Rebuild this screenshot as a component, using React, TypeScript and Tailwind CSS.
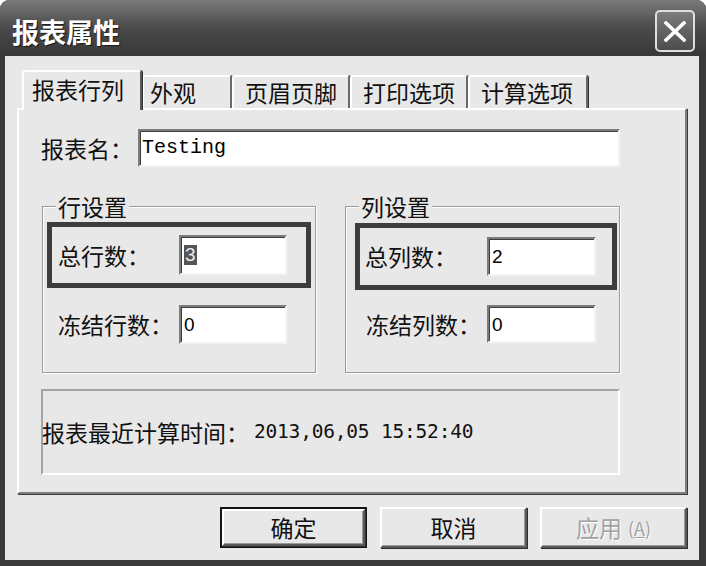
import React from "react";

const sunken =
  "bg-white border-2 border-t-[#7c7c7c] border-l-[#7c7c7c] border-b-[#f4f4f4] border-r-[#f4f4f4] shadow-[inset_1px_1px_0_#3e3e3e]";
const raised =
  "border-2 border-t-white border-l-white border-r-[#5a5a5a] border-b-[#5a5a5a] shadow-[inset_-1px_-1px_0_#9a9a9a,1px_1px_0_#2e2e2e]";

function Input({ w, h, children }: { w: string; h: string; children?: React.ReactNode }) {
  return (
    <div className={`${w} ${h} ${sunken} flex items-center pl-[3px] font-['Liberation_Sans',sans-serif] text-[19px] leading-none text-black`}>
      {children}
    </div>
  );
}

function Tab({ label, w, pl, active }: { label: string; w: string; pl: string; active?: boolean }) {
  if (active) {
    return (
      <div
        className={`${w} h-[40px] -mb-[2px] relative z-10 bg-[#e8e8e8] border-t-2 border-l-2 border-white border-r-2 border-r-[#5a5a5a] rounded-t-[3px] shadow-[1px_0_0_#2e2e2e] pt-[4px] ${pl} text-[23px] leading-[26px]`}
      >
        {label}
      </div>
    );
  }
  return (
    <div
      className={`${w} h-[33px] bg-[#e8e8e8] border-t-2 border-l-2 border-white border-r-2 border-r-[#6a6a6a] rounded-t-[3px] shadow-[1px_0_0_#2e2e2e] pt-[2px] ${pl} text-[23px] leading-[26px]`}
    >
      {label}
    </div>
  );
}

export default function App() {
  return (
    <div className="w-[706px] h-[566px] bg-white">
      <div className="w-[706px] h-[566px] flex flex-col rounded-t-[9px] overflow-hidden bg-[#3a3a3a] font-['Noto_Sans_CJK_SC',sans-serif] text-[#111]">
        {/* Title bar */}
        <div className="h-[56px] shrink-0 flex items-center justify-between pl-[12px] pr-[11px] bg-linear-to-b from-[#7a7a7a] via-[#4a4a4a] to-[#383838]">
          <span className="text-[27px] font-bold text-white leading-none mt-[6px] [text-shadow:1px_1px_1px_#1a1a1a]">
            报表属性
          </span>
          <div className="w-[40px] h-[42px] mt-[6px] rounded-[5px] border-2 border-[#dedede] bg-linear-to-b from-[#7c7c7c] to-[#4c4c4c] flex items-center justify-center">
            <svg width="22" height="21" viewBox="0 0 22 21">
              <path d="M2 2 L20 19 M20 2 L2 19" stroke="white" strokeWidth="3.6" strokeLinecap="square" />
            </svg>
          </div>
        </div>

        {/* Body */}
        <div className="flex-1 ml-[5px] mr-[7px] mb-[6px] bg-[#e8e8e8] flex flex-col">
          {/* Tabs */}
          <div className="h-[52px] shrink-0 flex items-end pl-[17px]">
            <Tab label="报表行列" w="w-[120px]" pl="pl-[8px]" active />
            <Tab label="外观" w="w-[90px]" pl="pl-[6px]" />
            <Tab label="页眉页脚" w="w-[118px]" pl="pl-[11px]" />
            <Tab label="打印选项" w="w-[118px]" pl="pl-[11px]" />
            <Tab label="计算选项" w="w-[120px]" pl="pl-[11px]" />
          </div>

          {/* Panel */}
          <div className="ml-[12px] w-[670px] h-[386px] shrink-0 border-2 border-t-white border-l-white border-r-[#7e7e7e] border-b-[#7e7e7e] shadow-[1px_1px_0_#3a3a3a] pl-[22px] pt-[19px] flex flex-col">
            {/* Report name */}
            <div className="flex items-center h-[38px]">
              <span className="w-[97px] text-[23px] leading-none">报表名：</span>
              <div className={`w-[482px] h-[38px] ${sunken} flex items-center pl-[2px] font-['Liberation_Mono',monospace] text-[20px] leading-none text-black`}>
                Testing
              </div>
            </div>

            {/* Groups */}
            <div className="flex gap-[29px] mt-[39px] ml-[1px]">
              {/* Row settings */}
              <div className="w-[274px] h-[167px] border border-[#9a9a9a] shadow-[inset_1px_1px_0_#fff,1px_1px_0_#fff] flex flex-col">
                <div className="self-start ml-[13px] px-[2px] -mt-[14px] h-[26px] leading-[26px] bg-[#e8e8e8] text-[23px]">
                  行设置
                </div>
                <div className="mt-[3px] ml-[4px] w-[264px] h-[66px] border-[5px] border-[#3d3d3d] flex items-center pl-[6px]">
                  <span className="w-[121px] text-[23px] leading-none">总行数：</span>
                  <Input w="w-[108px]" h="h-[40px]">
                    <span className="bg-[#555] text-[#eee] px-[1px] leading-[20px]">3</span>
                  </Input>
                </div>
                <div className="mt-[17px] h-[39px] flex items-center pl-[15px]">
                  <span className="w-[121px] text-[23px] leading-none">冻结行数：</span>
                  <Input w="w-[108px]" h="h-[39px]">0</Input>
                </div>
              </div>

              {/* Column settings */}
              <div className="w-[275px] h-[167px] border border-[#9a9a9a] shadow-[inset_1px_1px_0_#fff,1px_1px_0_#fff] flex flex-col">
                <div className="self-start ml-[13px] px-[2px] -mt-[14px] h-[26px] leading-[26px] bg-[#e8e8e8] text-[23px]">
                  列设置
                </div>
                <div className="mt-[4px] ml-[9px] w-[262px] h-[67px] border-[5px] border-[#3d3d3d] flex items-center pl-[5px]">
                  <span className="w-[122px] text-[23px] leading-none">总列数：</span>
                  <Input w="w-[109px]" h="h-[39px]">2</Input>
                </div>
                <div className="mt-[15px] h-[38px] flex items-center pl-[20px]">
                  <span className="w-[121px] text-[23px] leading-none">冻结列数：</span>
                  <Input w="w-[109px]" h="h-[38px]">0</Input>
                </div>
              </div>
            </div>

            {/* Info box */}
            <div className="mt-[16px] w-[579px] h-[86px] border-2 border-t-[#a4a4a4] border-l-[#a4a4a4] border-b-white border-r-white flex items-center">
              <span className="-ml-[1px] text-[23px] leading-none">报表最近计算时间：</span>
              <span className="ml-[5px] font-['DejaVu_Sans_Mono',monospace] text-[19.5px] leading-none tracking-[-0.2px]">
                2013,06,05 15:52:40
              </span>
            </div>
          </div>

          {/* Buttons */}
          <div className="mt-[13px] flex justify-end gap-[13px] pr-[12px]">
            <div className="w-[147px] h-[41px] border-2 border-[#141414] flex">
              <div className={`flex-1 ${raised} flex items-center justify-center text-[23px] leading-none`}>确定</div>
            </div>
            <div className={`w-[147px] h-[41px] ${raised} flex items-center justify-center text-[23px] leading-none`}>
              取消
            </div>
            <div className={`w-[147px] h-[41px] ${raised} flex items-center justify-center text-[23px] leading-none text-[#a2a2a2] [text-shadow:1px_1px_0_#fff]`}>
              应用
              <span className="ml-[6px] text-[18px]">
                (<span className="underline">A</span>)
              </span>
            </div>
          </div>
        </div>
      </div>
    </div>
  );
}
